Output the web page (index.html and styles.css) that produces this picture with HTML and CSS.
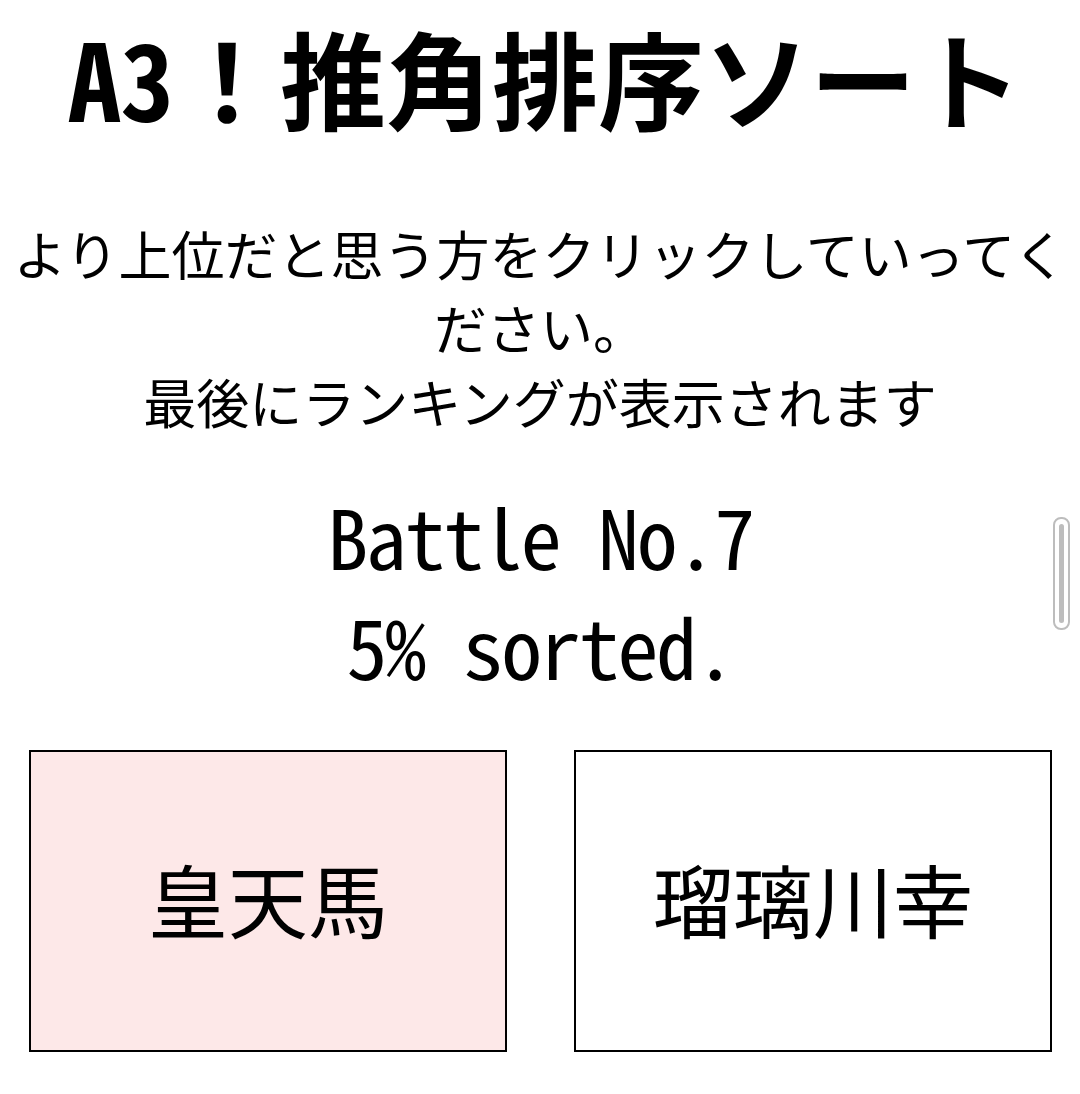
FILE: index.html
```html
<!DOCTYPE html>
<html lang="ja">
<head>
	<meta charset="UTF-8">
	<title>A3！推角排序ソート</title>
	<link rel="stylesheet" href="styles.css">
</head>
<body>
<div class="wrapper">
	<h1 class="title">A3！推角排序ソート</h1>
	<p class="lead">より上位だと思う方をクリックしていってください。<br>最後にランキングが表示されます</p>
	<div class="status">
		<div class="battle">Battle No.7</div>
		<div class="progress">5% sorted.</div>
	</div>
	<div class="choices">
		<div class="choice choice-left">皇天馬</div>
		<div class="choice">瑠璃川幸</div>
	</div>
</div>
<div class="scroll-thumb"><div class="scroll-bar"></div></div>
</body>
</html>
```

FILE: styles.css
```css
body {
	margin: 8px;
	font-family: "Noto Sans CJK JP", sans-serif;
	color: #000;
	background: #fff;
}

.wrapper {
	text-align: center;
}

.title {
	margin: 0;
	padding-left: 10px;
	font-family: "Noto Sans Mono CJK JP", "Noto Sans CJK JP", monospace;
	font-size: 106px;
	font-weight: bold;
	line-height: 136px;
}

.lead {
	margin: 72px 0 0;
	font-size: 53px;
	line-height: 74px;
}

.status {
	margin-top: 42px;
	font-family: "Noto Sans Mono CJK JP", "Noto Sans CJK JP", monospace;
	font-size: 82px;
	letter-spacing: -2.3px;
	line-height: 110px;
}

.choices {
	display: flex;
	justify-content: space-between;
	margin-top: 50px;
	padding: 0 20px 0 21px;
}

.choice {
	box-sizing: border-box;
	width: 478px;
	height: 302px;
	padding-bottom: 8px;
	border: 2px solid #000;
	display: flex;
	align-items: center;
	justify-content: center;
	font-size: 80px;
}

.choice-left {
	background-color: #fde8e8;
}

.scroll-thumb {
	position: fixed;
	top: 517px;
	right: 10px;
	box-sizing: border-box;
	width: 17px;
	height: 113px;
	border: 2px solid #bdbdbd;
	border-radius: 8px;
	padding: 5px 4px;
}
.scroll-bar {
	height: 100%;
	background-color: #bdbdbd;
	border-radius: 3px;
}
```
